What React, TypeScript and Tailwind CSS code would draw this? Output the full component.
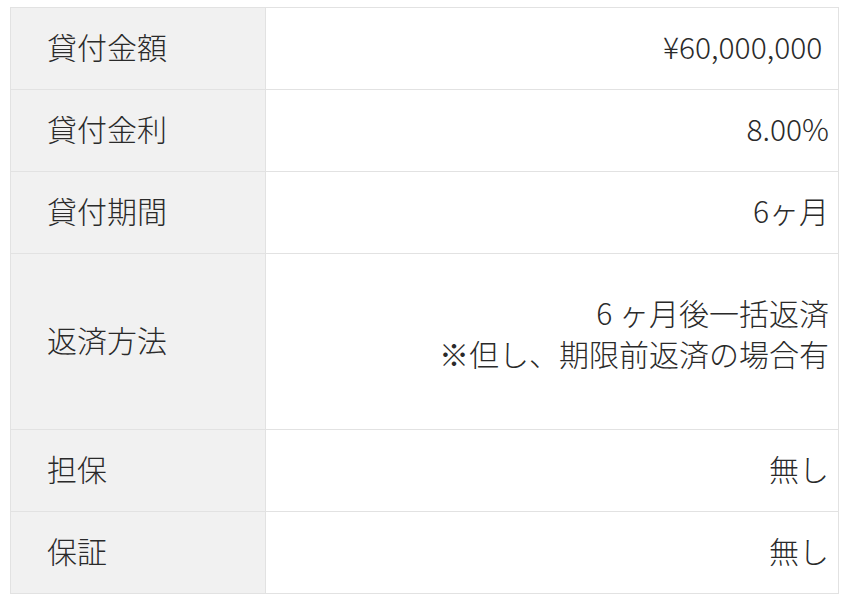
const rows: { label: string; value: string[]; tall?: boolean }[] = [
  { label: "貸付金額", value: ["¥60,000,000\u00a0"] },
  { label: "貸付金利", value: ["8.00%"] },
  { label: "貸付期間", value: ["6ヶ月"] },
  { label: "返済方法", value: ["6 ヶ月後一括返済", "※但し、期限前返済の場合有"], tall: true },
  { label: "担保", value: ["無し"] },
  { label: "保証", value: ["無し"] },
]

export default function App() {
  return (
    <div
      className="min-h-[609px] w-[853px] bg-white pl-[10px] pt-[7px] text-[#2a2a2a]"
      style={{ fontFamily: '"Noto Sans CJK JP", "Noto Sans", sans-serif' }}
    >
      <table className="w-[829px] border-collapse border border-[#e2e2e2] text-[30px] font-light">
        <tbody>
          {rows.map((row) => (
            <tr key={row.label} className={row.tall ? "h-[176px]" : "h-[82px]"}>
              <th className="w-[255px] border border-[#e2e2e2] bg-[#f1f1f1] pb-[5px] pl-[36px] text-left font-light">
                {row.label}
              </th>
              <td className="border border-[#e2e2e2] pb-[5px] pr-[9px] text-right">
                <div className={row.tall ? "pb-[12px] leading-[41px]" : ""}>
                  {row.value.map((line) => (
                    <div key={line}>{line}</div>
                  ))}
                </div>
              </td>
            </tr>
          ))}
        </tbody>
      </table>
    </div>
  )
}
